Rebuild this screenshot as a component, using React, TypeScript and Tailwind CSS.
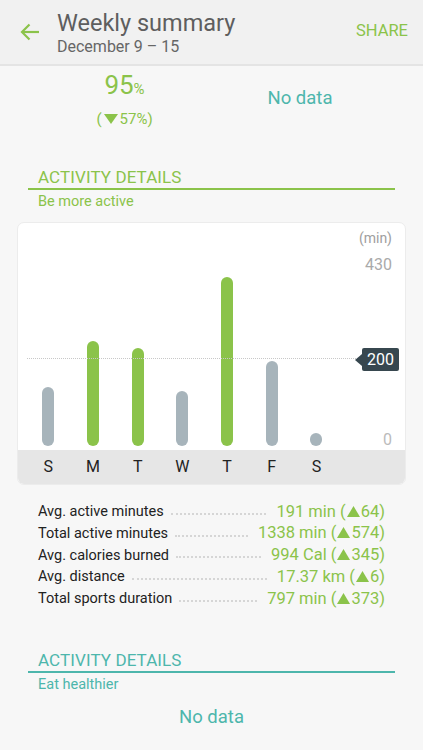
import React from "react";

const GREEN = "#8bc34a";
const TEAL = "#4db6ac";

const bars = [
  { day: "S", h: 59, goal: false },
  { day: "M", h: 105, goal: true },
  { day: "T", h: 98, goal: true },
  { day: "W", h: 55, goal: false },
  { day: "T", h: 169, goal: true },
  { day: "F", h: 85, goal: false },
  { day: "S", h: 13, goal: false },
];

const stats = [
  { label: "Avg. active minutes", value: "191 min (", delta: "64" },
  { label: "Total active minutes", value: "1338 min (", delta: "574" },
  { label: "Avg. calories burned", value: "994 Cal (", delta: "345" },
  { label: "Avg. distance", value: "17.37 km (", delta: "6" },
  { label: "Total sports duration", value: "797 min (", delta: "373" },
];

const Up = () => (
  <svg width="13" height="11" viewBox="0 0 13 11" className="inline-block mx-[1px] mb-[2px]">
    <path d="M6.5 0 L13 11 L0 11 Z" fill={GREEN} />
  </svg>
);

const Down = () => (
  <svg width="14" height="10" viewBox="0 0 14 10" className="inline-block mx-[2px] mb-[2px]">
    <path d="M0 0 L14 0 L7 10 Z" fill={GREEN} />
  </svg>
);

const SectionHead = ({ title, sub, color }: { title: string; sub: string; color: string }) => (
  <div className="px-[28px]">
    <div className="pl-[10px] text-[17px] leading-[20px] tracking-[0.1px]" style={{ color }}>
      {title}
    </div>
    <div className="h-[2px] mt-[1px]" style={{ backgroundColor: color }} />
    <div className="pl-[10px] text-[14.5px] leading-[20px] mt-[2px]" style={{ color }}>
      {sub}
    </div>
  </div>
);

export default function App() {
  return (
    <div
      className="w-[423px] h-[750px] overflow-hidden bg-[#f7f7f7]"
      style={{ fontFamily: "Roboto, 'Noto Sans', sans-serif" }}
    >
      {/* header */}
      <div className="h-[66px] bg-[#f1f1f1] border-b-2 border-[#e4e4e4] flex items-center">
        <div className="w-[57px] flex justify-center pl-[2px] pb-[1px]">
          <svg width="20" height="18" viewBox="0 0 20 18" fill="none" stroke={GREEN} strokeWidth="2.2">
            <path d="M19 9 H2.5" />
            <path d="M9.5 1.5 L2 9 L9.5 16.5" />
          </svg>
        </div>
        <div className="flex-1 pt-[1px]">
          <div className="text-[23.5px] leading-[28px] text-[#5e5e5e]">Weekly summary</div>
          <div className="text-[16px] leading-[20px] text-[#666]">December 9 – 15</div>
        </div>
        <div className="pr-[15px] text-[16.5px] pb-[1px]" style={{ color: GREEN }}>
          SHARE
        </div>
      </div>

      {/* top stats */}
      <div className="flex h-[66px]">
        <div className="w-[250px] flex flex-col items-center pt-[5px] pr-[1px]">
          <div className="leading-[28px]" style={{ color: GREEN }}>
            <span className="text-[26px]">95</span>
            <span className="text-[15px]">%</span>
          </div>
          <div className="text-[15px] leading-[20px] mt-[6px]" style={{ color: GREEN }}>
            (<Down />57%)
          </div>
        </div>
        <div className="w-[100px] flex justify-center pt-[21px]">
          <div className="text-[18.5px] leading-[22px]" style={{ color: TEAL }}>
            No data
          </div>
        </div>
      </div>

      <div className="h-[35px]" />
      <SectionHead title="ACTIVITY DETAILS" sub="Be more active" color={GREEN} />

      {/* chart card */}
      <div className="mx-[17px] mt-[10px] h-[263px] bg-white rounded-[7px] border border-[#ececec] flex flex-col overflow-hidden">
        <div className="relative h-[227px] flex items-end pl-[8px] pb-[4px]">
          {bars.map((b, i) => (
            <div key={i} className="w-[44.7px] flex justify-center">
              <div
                className={`w-[12px] rounded-full ${b.goal ? "bg-[#8bc34a]" : "bg-[#a7b4bb]"}`}
                style={{ height: b.h }}
              />
            </div>
          ))}
          <div className="absolute right-[13px] top-[5px] text-[14px] text-[#9e9e9e]">(min)</div>
          <div className="absolute right-[13px] top-[30px] text-[16px] text-[#aaa]">430</div>
          <div className="absolute right-[13px] top-[205px] text-[16px] text-[#bbb]">0</div>
          <div className="absolute left-[9px] top-[135px] w-[329px] border-t border-dotted border-[#c8c8c8]" />
          <div className="absolute left-[337px] top-[125px] flex items-center">
            <div className="w-0 h-0 border-y-[6px] border-y-transparent border-r-[7px] border-r-[#37474f]" />
            <div className="h-[23px] px-[5px] rounded-[2px] bg-[#37474f] text-white text-[16px] leading-[23px]">
              200
            </div>
          </div>
        </div>
        <div className="flex-1 bg-[#e6e6e6] flex items-center pl-[8px]">
          {bars.map((b, i) => (
            <div key={i} className="w-[44.7px] text-center text-[16px] text-[#222]">
              {b.day}
            </div>
          ))}
        </div>
      </div>

      {/* stats list */}
      <div className="mt-[16px] pl-[38px] pr-[38px]">
        {stats.map((s) => (
          <div key={s.label} className="h-[21.8px] flex items-center">
            <span className="text-[14.5px] text-[#222] whitespace-nowrap">{s.label}</span>
            <span className="flex-1 mx-[7px] mt-[4px] border-t-2 border-dotted border-[#d6d6d6]" />
            <span className="text-[16.5px] whitespace-nowrap ml-[3px]" style={{ color: GREEN }}>
              {s.value}
              <Up />
              {s.delta})
            </span>
          </div>
        ))}
      </div>

      <div className="h-[40px]" />
      <SectionHead title="ACTIVITY DETAILS" sub="Eat healthier" color={TEAL} />
      <div className="text-center text-[18.5px] mt-[9px]" style={{ color: TEAL }}>
        No data
      </div>
    </div>
  );
}
